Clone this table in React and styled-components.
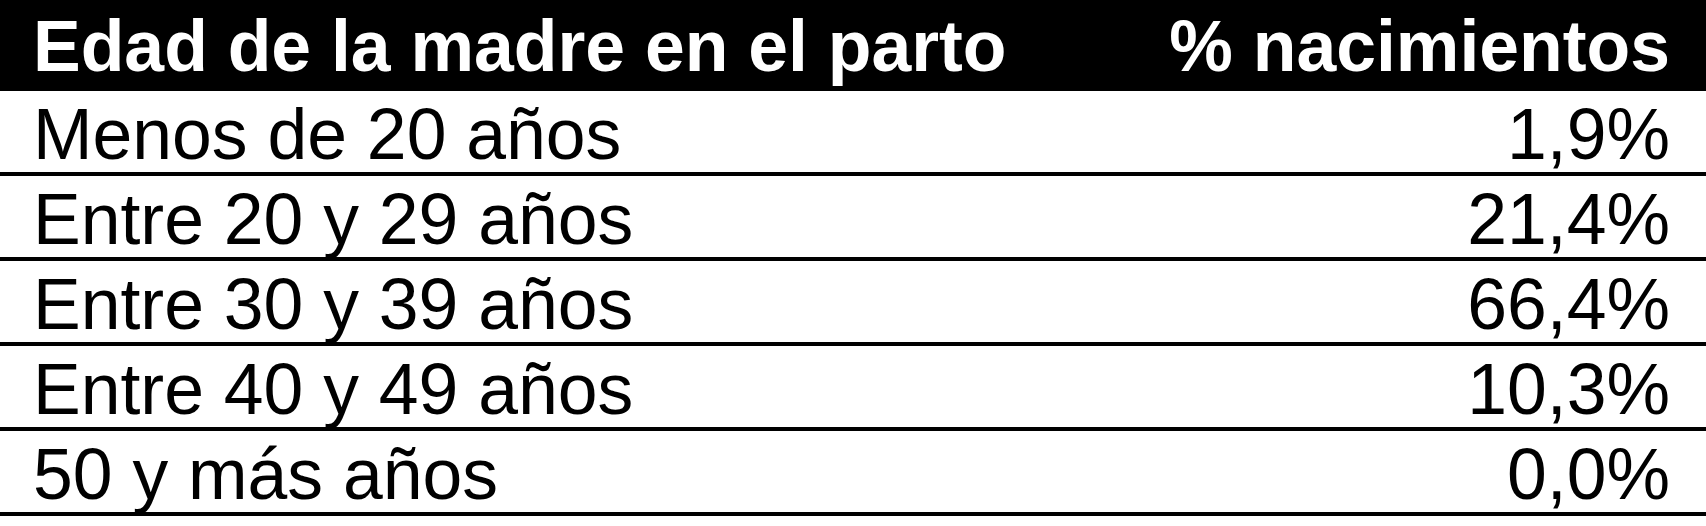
import React from 'react';
import styled, { createGlobalStyle } from 'styled-components';

const rows = [
  ['Menos de 20 años', '1,9%'],
  ['Entre 20 y 29 años', '21,4%'],
  ['Entre 30 y 39 años', '66,4%'],
  ['Entre 40 y 49 años', '10,3%'],
  ['50 y más años', '0,0%'],
];

export default () => (
  <>
    <GlobalStyle />
    <Table>
      <HeaderRow>
        <Cell>Edad de la madre en el parto</Cell>
        <Cell right>% nacimientos</Cell>
      </HeaderRow>
      {rows.map(([label, value]) => (
        <Row key={label}>
          <Cell>{label}</Cell>
          <Cell right>{value}</Cell>
        </Row>
      ))}
    </Table>
  </>
);

const GlobalStyle = createGlobalStyle`
  html, body {
    margin: 0;
    padding: 0;
    background: #fff;
  }
`;

const Table = styled.div`
  width: 1706px;
  height: 526px;
  background: #fff;
  font-family: 'Liberation Sans', Arial, sans-serif;
  font-size: 71.5px;
  color: #000;
`;

const HeaderRow = styled.div`
  display: flex;
  justify-content: space-between;
  height: 91px;
  line-height: 91px;
  padding: 1px 36px 0 33px;
  box-sizing: border-box;
  background: #000;
  color: #fff;
  font-weight: bold;
`;

const Row = styled.div`
  display: flex;
  justify-content: space-between;
  height: 85px;
  line-height: 80px;
  padding: 3px 36px 0 33px;
  box-sizing: border-box;
  border-bottom: 4px solid #000;
`;

const Cell = styled.div`
  white-space: nowrap;
  text-align: ${p => (p.right ? 'right' : 'left')};
`;
